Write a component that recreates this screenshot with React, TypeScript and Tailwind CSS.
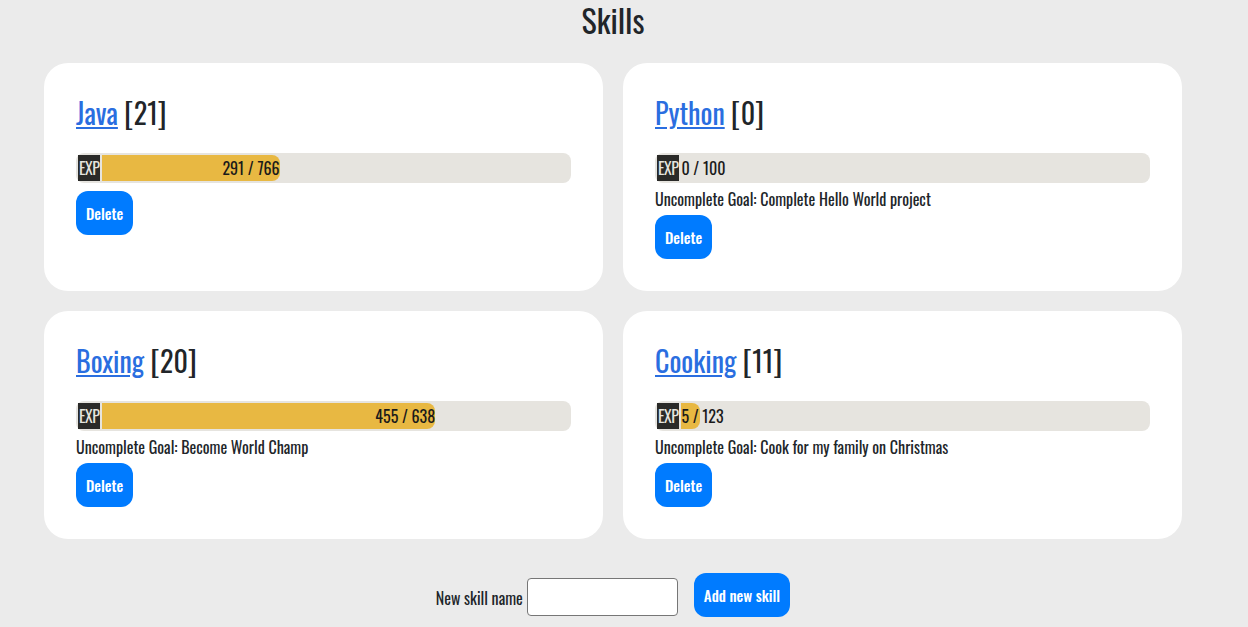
import React from "react";

type Skill = { name: string; level: number; exp: number; max: number; goal?: string };

const skills: Skill[] = [
  { name: "Java", level: 21, exp: 291, max: 766 },
  { name: "Python", level: 0, exp: 0, max: 100, goal: "Complete Hello World project" },
  { name: "Boxing", level: 20, exp: 455, max: 638, goal: "Become World Champ" },
  { name: "Cooking", level: 11, exp: 5, max: 123, goal: "Cook for my family on Christmas" },
];

const font = {
  fontFamily: '"Oswald", "Liberation Sans Narrow", "DejaVu Sans Condensed", sans-serif',
};

function Card({ s }: { s: Skill }) {
  const pct = (s.exp / s.max) * 100;
  return (
    <div className="bg-white rounded-[24px] p-8 flex flex-col items-start">
      <h2 className="text-[28px] leading-[36px] text-[#212529] mb-[22px]">
        <a href="#" className="text-[#2a6ee0] underline">{s.name}</a> [{s.level}]
      </h2>
      <div className="w-full h-[30px] rounded-lg bg-[#e6e4df] p-[2px] flex">
        <div className="bg-[#2a2a28] text-[#e6e4df] text-[16px] leading-[26px] px-[1px] h-full tracking-[-0.5px]">EXP</div>
        <div className="flex-1 h-full ml-[2px]">
          <div
            className="h-full bg-[#e8b842] rounded-r-lg text-right whitespace-nowrap text-[16px] leading-[26px] text-[#1a1a1a]"
            style={{ width: `${pct}%` }}
          >
            {s.exp} / {s.max}
          </div>
        </div>
      </div>
      {s.goal && (
        <p className="mt-1 text-[16px] leading-6 text-[#212529]">Uncomplete Goal: {s.goal}</p>
      )}
      <button className={`${s.goal ? "mt-1" : "mt-2"} h-[44px] px-[10px] rounded-xl bg-[#007bff] text-white text-[15px] font-medium`}>
        Delete
      </button>
    </div>
  );
}

export default function App() {
  return (
    <div className="min-h-screen bg-[#ebebeb]" style={font}>
      <div className="w-[1226px] flex flex-col items-center">
        <h1 className="text-[32px] leading-[40px] text-[#212529]">Skills</h1>
        <div className="w-[1138px] grid grid-cols-2 gap-5 mt-[23px]">
          {skills.map((s) => (
            <Card key={s.name} s={s} />
          ))}
        </div>
        <div className="flex items-center mt-[34px]">
          <label className="text-[16px] text-[#212529] mr-1 mt-[5px]">New skill name</label>
          <input className="w-[151px] h-[38px] border border-[#767676] rounded-sm bg-white mt-[4px]" />
          <button className="ml-4 h-[44px] px-[10px] rounded-xl bg-[#007bff] text-white text-[15px] font-medium">
            Add new skill
          </button>
        </div>
      </div>
    </div>
  );
}
